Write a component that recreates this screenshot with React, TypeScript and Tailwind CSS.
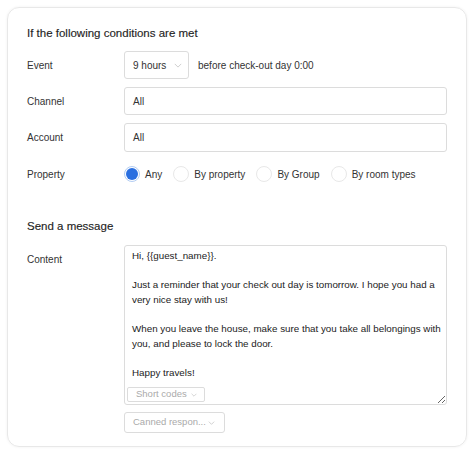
import { FC, ReactNode } from "react";

const font = { fontFamily: '"Liberation Sans", Arial, sans-serif' };

const message = `Hi, {{guest_name}}.

Just a reminder that your check out day is tomorrow. I hope you had a very nice stay with us!

When you leave the house, make sure that you take all belongings with you, and please to lock the door.

Happy travels!`;

const Chevron: FC<{ className?: string }> = ({ className }) => (
  <svg className={className} viewBox="0 0 10 6" fill="none" stroke="currentColor" strokeWidth="1">
    <path d="M1 1l4 4 4-4" />
  </svg>
);

const Row: FC<{ label: string; children: ReactNode; top?: boolean }> = ({ label, children, top }) => (
  <div className={`flex ${top ? "items-start" : "items-center"}`}>
    <div className={`w-[97px] shrink-0 text-[10px] text-[#333] ${top ? "pt-[7px]" : ""}`}>{label}</div>
    <div className="flex-1 min-w-0">{children}</div>
  </div>
);

const Radio: FC<{ label: string; checked?: boolean }> = ({ label, checked }) => (
  <label className="flex items-center whitespace-nowrap">
    <span
      className={`w-[16px] h-[16px] rounded-full flex items-center justify-center bg-white border ${
        checked ? "border-[#b3cdf3]" : "border-[#e8e8e8]"
      }`}
    >
      {checked && <span className="w-[12px] h-[12px] rounded-full bg-[#2a6fe0]" />}
    </span>
    <span className="ml-[5px] text-[10px] text-[#333]">{label}</span>
  </label>
);

const Heading: FC<{ children: ReactNode; className?: string }> = ({ children, className }) => (
  <h2 className={`text-[11.5px] leading-[18px] text-[#1f1f1f] [-webkit-text-stroke:0.15px_#1f1f1f] ${className ?? ""}`}>
    {children}
  </h2>
);

export default function App() {
  return (
    <div className="w-[474px] h-[454px] bg-white p-[7px]" style={font}>
      <div className="h-[440px] rounded-[12px] border border-[#e8e8e8] shadow-[0_0_3px_rgba(0,0,0,0.06)] px-[19px] pt-[16px]">
        <Heading>If the following conditions are met</Heading>

        <div className="mt-[9px] flex flex-col gap-[8px]">
          <Row label="Event">
            <div className="flex items-center">
              <div className="h-[28px] w-[65px] rounded-[3px] border border-[#dcdcdc] flex items-center pl-[8px] pr-[6px] justify-between">
                <span className="text-[10px] text-[#333]">9 hours</span>
                <Chevron className="w-[8px] h-[5px] text-[#c4c4c4]" />
              </div>
              <span className="ml-[9px] text-[10px] text-[#333]">before check-out day 0:00</span>
            </div>
          </Row>

          <Row label="Channel">
            <div className="h-[28px] rounded-[3px] border border-[#dcdcdc] flex items-center px-[8px] text-[10px] text-[#333]">
              All
            </div>
          </Row>

          <Row label="Account">
            <div className="h-[29px] rounded-[3px] border border-[#dcdcdc] flex items-center px-[8px] text-[10px] text-[#333]">
              All
            </div>
          </Row>

          <Row label="Property">
            <div className="h-[28px] flex items-center gap-[11px]">
              <Radio label="Any" checked />
              <Radio label="By property" />
              <Radio label="By Group" />
              <Radio label="By room types" />
            </div>
          </Row>
        </div>

        <Heading className="mt-[29px]">Send a message</Heading>

        <div className="mt-[10px]">
          <Row label="Content" top>
            <div className="relative">
              <textarea
                readOnly
                value={message}
                className="block w-full h-[160px] resize-y rounded-[3px] border border-[#dcdcdc] pl-[7px] pr-[2px] pt-[3px] text-[9.8px] leading-[14.6px] text-[#222] outline-none"
              />
              <button className="absolute left-[3px] bottom-[3px] h-[15px] w-[78px] rounded-[2px] border border-[#dcdcdc] bg-white pl-[8px] flex items-center gap-[4px] text-[9.5px] text-[#aaa]">
                Short codes
                <Chevron className="w-[6px] h-[4px] text-[#bbb]" />
              </button>
            </div>
            <button className="mt-[7px] h-[21px] w-[101px] rounded-[3px] border border-[#dcdcdc] bg-white pl-[8px] pr-[9px] flex items-center justify-between whitespace-nowrap text-[9.5px] text-[#aaa]">
              Canned respon...
              <Chevron className="w-[7px] h-[4px] text-[#bbb]" />
            </button>
          </Row>
        </div>
      </div>
    </div>
  );
}
